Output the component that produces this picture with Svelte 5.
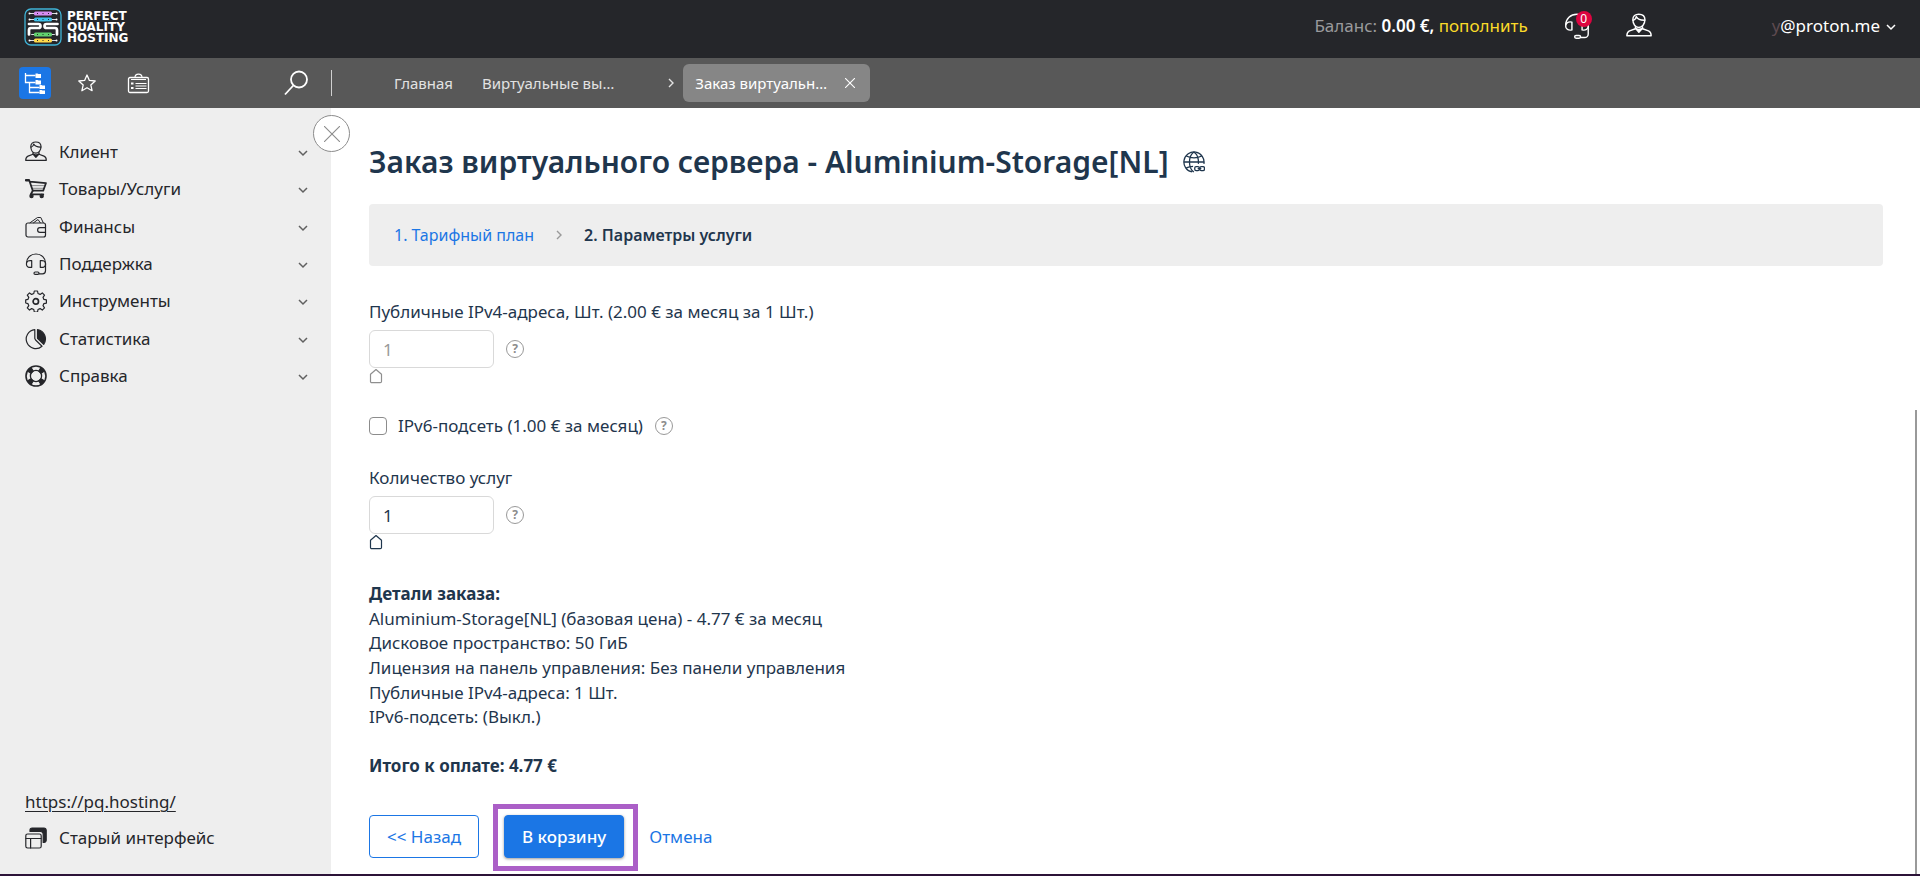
<script>
  const menu = [
    { icon: 'client', label: 'Клиент' },
    { icon: 'cart', label: 'Товары/Услуги' },
    { icon: 'wallet', label: 'Финансы' },
    { icon: 'headset', label: 'Поддержка' },
    { icon: 'gear', label: 'Инструменты' },
    { icon: 'pie', label: 'Статистика' },
    { icon: 'buoy', label: 'Справка' }
  ];

  const details = [
    'Aluminium-Storage[NL] (базовая цена) - 4.77 € за месяц',
    'Дисковое пространство: 50 ГиБ',
    'Лицензия на панель управления: Без панели управления',
    'Публичные IPv4-адреса: 1 Шт.',
    'IPv6-подсеть: (Выкл.)'
  ];

  const bars = [
    { y: 5, color: '#d88cf0' },
    { y: 11, color: '#3fc1ea' },
    { y: 26, color: '#62d26f' },
    { y: 32, color: '#ffd94a' }
  ];

  let ipv6 = $state(false);
  let count = $state('1');
</script>

{#snippet icon(name)}
  <svg class="icon" viewBox="0 0 22 22" fill="none" stroke="currentColor" stroke-width="1.2" stroke-linecap="round" stroke-linejoin="round" aria-hidden="true">
    {#if name === 'client'}
      <path d="M5.8 5.5C5.8 2.6 7.8 1 10.8 1s5.2 1.7 5.2 4.6c0 4-2.4 6.6-5.2 6.6S5.8 9.5 5.8 5.5Z" />
      <path d="M6 6.2C8 5.6 8.600 4.400 8.700 3c1.200 2.200 4 3.200 7.200 3.100" />
      <path d="M8 11.700v1.600l-5 1.800C1.400 15.700.8 17 .7 19.300h20.600c0-2.300-.7-3.600-2.300-4.200l-5-1.800v-1.600" />
      <path d="M8 13l2.900 3.300L14 13l-3.100 1Z" fill="currentColor" />
    {:else if name === 'cart'}
      <path d="M1.200 2.200h3l3.600 10.500h10.400l2.700-7.500-16-1.500" stroke-width="1.800" />
      <path d="M6.300 7.600h12.200M7.600 10.300h11" stroke-width=".5" />
      <path d="M1 2.200h2.500" stroke-width="2.400" />
      <path d="M7.800 12.700l-2 3.600h12.500" stroke-width="1.800" />
      <circle cx="6.500" cy="18" r="1.600" fill="currentColor" />
      <circle cx="16.700" cy="18" r="1.600" fill="currentColor" />
    {:else if name === 'wallet'}
      <rect x="1" y="7" width="19.500" height="14" rx="2" />
      <path d="M20.500 11.700h-5.600a2.300 2.300 0 0 0 0 4.600h5.600" />
      <path d="M5 6.800 12.500 1.500h3.300L18.300 6.800M8.500 6.800l4.500-3.300 2.300 3.300" stroke-width="1" />
    {:else if name === 'headset'}
      <path d="M1.500 10C1.500 5 5.500 1 11 1s9.500 4 9.500 9v7.800a3 3 0 0 1-3 3h-3.300" />
      <path d="M6.700 7.700v6.600c-3 .6-5.300-.5-5.300-3.300s2.300-3.900 5.300-3.300ZM15.300 7.700v6.600c3 .6 5.300-.5 5.300-3.300s-2.300-3.900-5.300-3.300Z" />
      <rect x="9" y="19" width="5" height="2.400" rx="1.200" />
    {:else if name === 'gear'}
      <path d="M8.800 3.500 9.300 1h3.200l.5 2.500 2.100.9 2.200-1.500 2.200 2.200-1.500 2.200.9 2.100 2.500.5v3.200l-2.500.5-.9 2.100 1.500 2.200-2.200 2.200-2.200-1.500-2.100.9-.5 2.500H9.300l-.5-2.500-2.100-.9-2.200 1.500-2.200-2.200 1.500-2.200-.9-2.100L.7 13V9.900l2.200-.5.9-2.100-1.500-2.200 2.200-2.200 2.200 1.500Z" />
      <circle cx="10.800" cy="11.400" r="2.700" stroke-width="1.700" />
    {:else if name === 'pie'}
      <path d="M9.800 1.600a9.500 9.500 0 1 0 7.200 16.600l-6.400-6.200-.8-1.500Z" />
      <path d="M12.500 1.500v8.800l6.200 6A9.500 9.500 0 0 0 12.500 1.500Z" fill="currentColor" />
    {:else if name === 'buoy'}
      <circle cx="11" cy="11" r="10" stroke-width="1.600" />
      <circle cx="11" cy="11" r="5.600" stroke-width="1.300" />
      {#each [45, 135, 225, 315] as a}
        <path d="M8.600 1.800h4.800l-.9 3.700h-3Z" fill="currentColor" transform="rotate({a} 11 11)" />
      {/each}
    {:else if name === 'windows'}
      <path d="M5 4.500V3.200A2.200 2.200 0 0 1 7.200 1H19a2.200 2.200 0 0 1 2.200 2.200v10.100a2.200 2.200 0 0 1-2.200 2.200h-.8V7.100A2.600 2.600 0 0 0 15.600 4.500Z" fill="currentColor" />
      <rect x=".8" y="7" width="15.400" height="14" rx="1.800" />
      <path d="M1 11.500h15M5.600 11.500V21" />
    {/if}
  </svg>
{/snippet}

{#snippet chevron()}
  <svg class="chevron" viewBox="0 0 10 10" fill="none" stroke="currentColor" stroke-width="1.500" aria-hidden="true"><path d="M1 4l4 4 4-4" /></svg>
{/snippet}

{#snippet next()}
  <svg class="next" viewBox="0 0 6 10" fill="none" stroke="currentColor" stroke-width="1.400" aria-hidden="true"><path d="M1 1l4 4-4 4" /></svg>
{/snippet}

{#snippet handle()}
  <svg class="handle" viewBox="0 0 14 16" fill="none" stroke="currentColor" stroke-width="1.200" stroke-linejoin="round" aria-hidden="true"><path d="M1.500 6.300 7 1.500l5.500 4.800v7.200a1.200 1.200 0 0 1-1.200 1.200H2.700a1.200 1.200 0 0 1-1.200-1.200Z" /></svg>
{/snippet}

<div class="page">
  <header class="top">
    <a class="logo" href="#home">
      <svg viewBox="0 0 38 38" fill="none" aria-hidden="true">
        <rect x="1" y="1" width="36" height="36" rx="6" stroke="#3fb4d8" stroke-width="1.300" />
        {#each bars as b}
          <path d="M5 {b.y + 0.5}h28" stroke="#d9dce2" stroke-width="1" />
          <circle cx="5.500" cy={b.y + 0.5} r="1" fill="#fff" />
          <circle cx="32.500" cy={b.y + 0.5} r="1" fill="#fff" />
          <rect x="10" y={b.y - 1.5} width="18" height="4" rx="1.500" fill={b.color} />
          <path d="M13 {b.y + 0.5}h1M18.500 {b.y + 0.5}h1M24 {b.y + 0.5}h1" stroke="#25262a" stroke-width="1" />
        {/each}
        <g stroke-linecap="round" stroke-linejoin="round">
          <path d="M5 16h9.500q2 0 2 2t-2 2H7q-2 0-2 2v4.500M33.500 16h-11q-2 0-2 2t2 2h8.500q2 0 2 2v4.500" stroke="#25262a" stroke-width="4.500" />
          <path d="M5 16h9.500q2 0 2 2t-2 2H7q-2 0-2 2v4.500M33.500 16h-11q-2 0-2 2t2 2h8.500q2 0 2 2v4.500" stroke="#fff" stroke-width="2.700" />
        </g>
      </svg>
      <span class="wordmark"><span>PERFECT</span><span>QUALITY</span><span>HOSTING</span></span>
    </a>

    <div class="account">
      <span class="balance">Баланс: <b>0.00 €,</b> <a href="#pay">пополнить</a></span>
      <button class="bare support" aria-label="0">
        {@render icon('headset')}
        <span class="badge">0</span>
      </button>
      <span class="person">{@render icon('client')}</span>
      <button class="bare user"><span class="dim">y</span>@proton.me {@render chevron()}</button>
    </div>
  </header>

  <nav class="toolbar">
    <div class="tools">
      <button class="bare tool current" aria-label="Меню">
        <svg viewBox="0 0 24 24" fill="none" stroke="#fff" stroke-width="1.300" aria-hidden="true">
          <path d="M2.500 2v9.500h10M2.500 4.500h10M6.500 11.500v10h10M6.500 16.500h10" />
          <path d="M12.500 3.500v-1h2l1 .5h2.500v4h-5.500zM12.500 10v-1h2l1 .5h2.500v4h-5.500zM16.500 15v-1h2l1 .5h2.500v3.500h-5.500zM16.500 20v-1h2l1 .5h2.500v3.500h-5.500z" fill="#fff" stroke="none" />
        </svg>
      </button>
      <button class="bare tool" aria-label="Избранное">
        <svg viewBox="0 0 24 24" fill="none" stroke="#fff" stroke-width="1.300" stroke-linejoin="round" aria-hidden="true"><path d="m12 4 2.400 5.400 5.800.6-4.400 3.900 1.300 5.800L12 16.700l-5.100 3 1.300-5.800L3.800 10l5.800-.6Z" /></svg>
      </button>
      <button class="bare tool" aria-label="Задачи">
        <svg viewBox="0 0 24 24" fill="none" stroke="#fff" stroke-width="1.300" stroke-linejoin="round" aria-hidden="true">
          <rect x="1.500" y="6.500" width="20" height="15" rx="1.500" />
          <path d="M8 6.500c0-4.500 7-4.500 7 0M4 8.500h15" stroke-width="1.200" />
          <path d="M8.500 12.500h11M8.500 17.500h11M8.500 15h11" stroke-width="1" />
          <path d="M4 12.500h2.500M4 17h2.500" stroke-width="2" />
        </svg>
      </button>
      <button class="bare search" aria-label="Поиск">
        <svg viewBox="0 0 24 26" fill="none" stroke="#fff" stroke-width="1.800" aria-hidden="true"><circle cx="15" cy="9.500" r="8" /><path d="M9.300 15.500 1 24.500" /></svg>
      </button>
    </div>
    <div class="tabs">
      <a class="tab" href="#home">Главная</a>
      <a class="tab wide" href="#servers">Виртуальные вы…</a>
      {@render next()}
      <span class="tab active">Заказ виртуальн…
        <button class="bare close" aria-label="Закрыть"><svg viewBox="0 0 10 10" stroke="#fff" stroke-width="1.100" aria-hidden="true"><path d="M0 0l10 10M10 0L0 10" /></svg></button>
      </span>
    </div>
  </nav>

  <div class="body">
    <aside>
      <button class="bare collapse" aria-label="Свернуть"><svg viewBox="0 0 16 16" stroke="currentColor" stroke-width="1.100" aria-hidden="true"><path d="M0 0l16 16M16 0L0 16" /></svg></button>
      <ul>
        {#each menu as m}
          <li><button class="bare item">{@render icon(m.icon)}<span>{m.label}</span>{@render chevron()}</button></li>
        {/each}
      </ul>
      <div class="foot">
        <a class="site" href="#site">https://pq.hosting/</a>
        <a class="old" href="#old">{@render icon('windows')}<span>Старый интерфейс</span></a>
      </div>
    </aside>

    <main>
      <h1>
        Заказ виртуального сервера - Aluminium-Storage[NL]
        <svg class="globe" viewBox="0 0 24 24" fill="none" stroke="currentColor" stroke-width="1.400" aria-hidden="true">
          <path d="M22.800 14A11 11 0 1 0 10 22.900" />
          <path d="M11.800 1C5.500 5.500 5.500 18.500 11.800 23M12 1c4 3 5.200 8 4.800 13M3.500 5.500c5 2.300 12 2.300 17 0M1 12h22M3.500 18.500q3.500-1.500 7.500-1.700" />
          <rect x="12.800" y="17" width="5" height="4.500" rx="1.500" /><rect x="18.400" y="17" width="5" height="4.500" rx="1.500" /><path d="M16 19.200h4" />
        </svg>
      </h1>

      <div class="steps">
        <a href="#plan">1. Тарифный план</a>
        {@render next()}
        <strong>2. Параметры услуги</strong>
      </div>

      <form onsubmit={(e) => e.preventDefault()}>
        <div class="field off">
          <label for="ipv4">Публичные IPv4-адреса, Шт. (2.00 € за месяц за 1 Шт.)</label>
          <div class="line"><input id="ipv4" type="text" value="1" disabled /><span class="help">?</span></div>
          {@render handle()}
        </div>

        <div class="check">
          <input id="ipv6" type="checkbox" bind:checked={ipv6} />
          <label for="ipv6">IPv6-подсеть (1.00 € за месяц)</label>
          <span class="help">?</span>
        </div>

        <div class="field">
          <label for="count">Количество услуг</label>
          <div class="line"><input id="count" type="text" bind:value={count} /><span class="help">?</span></div>
          {@render handle()}
        </div>

        <div class="details">
          <b>Детали заказа:</b>
          {#each details as d}<span>{d}</span>{/each}
          <b class="total">Итого к оплате: 4.77 €</b>
        </div>

        <div class="actions">
          <button class="btn" type="button">&lt;&lt; Назад</button>
          <button class="btn primary" type="submit">В корзину</button>
          <button class="bare cancel" type="button">Отмена</button>
        </div>
      </form>
      <div class="scroll"></div>
    </main>
  </div>
</div>

<style>
  :global(body) { margin: 0; }
  .page {
    min-height: 100vh;
    box-sizing: border-box;
    display: flex;
    flex-direction: column;
    border-bottom: 2px solid #2c1338;
    background: #fff;
    color: #1f364d;
    font: 17px/24px "Noto Sans", sans-serif;
  }
  .page * { box-sizing: border-box; }
  a { color: inherit; text-decoration: none; }
  svg { display: block; flex: none; }
  .bare { border: 0; padding: 0; background: none; color: inherit; font: inherit; display: flex; align-items: center; cursor: pointer; }
  .icon { width: 22px; height: 22px; }
  .chevron { width: 10px; height: 10px; }
  .next { width: 6px; height: 10px; }

  .top { height: 58px; display: flex; align-items: center; justify-content: space-between; padding: 0 24px; background: #25262a; color: #fff; }
  .logo { display: flex; align-items: center; gap: 5px; padding-bottom: 4px; }
  .logo svg { width: 38px; height: 38px; }
  .wordmark { display: flex; flex-direction: column; font: bold 12px/11px "DejaVu Sans", sans-serif; }
  .account { display: flex; align-items: center; padding-bottom: 6px; }
  .balance { color: #9a9a9c; }
  .balance b { color: #fff; font-weight: 600; }
  .balance a { color: #fbdb29; }
  .support { position: relative; margin-left: 36px; }
  .account .icon { width: 26px; height: 26px; }
  .badge { position: absolute; top: -2px; left: 12px; width: 16px; height: 16px; border-radius: 8px; background: #dc0440; font-size: 12px; line-height: 16px; text-align: center; }
  .person { margin: 0 120px 0 36px; }
  .dim { color: #5e4a50; }
  .user .chevron { margin-left: 6px; }

  .toolbar { height: 50px; display: flex; align-items: center; background: #585858; color: #e2e2e2; font-size: 15px; }
  .tools { width: 332px; height: 26px; display: flex; align-items: center; gap: 20px; padding: 0 23px 0 19px; border-right: 1px solid #d0d0d0; }
  .tool { width: 32px; height: 32px; justify-content: center; border-radius: 4px; flex: none; }
  .tool svg { width: 24px; height: 24px; }
  .current { background: #1b76e5; }
  .search { margin-left: auto; }
  .search svg { width: 24px; height: 26px; }
  .tabs { display: flex; align-items: center; padding-left: 50px; }
  .tab { padding: 0 12px; line-height: 38px; }
  .tab.wide { margin: 0 42px 0 5px; }
  .tab.active { display: flex; align-items: center; gap: 18px; margin-left: 9px; padding-right: 15px; border-radius: 6px; background: #868686; color: #fff; }
  .close svg { width: 10px; height: 10px; }

  .body { flex: 1; display: flex; }
  aside { position: relative; width: 331px; flex: none; display: flex; flex-direction: column; justify-content: space-between; padding: 25px 23px 24px 25px; background: #eee; color: #25262a; }
  ul { min-height: 262px; margin: 0; padding: 0; list-style: none; display: grid; grid-auto-rows: 1fr; }
  li { display: flex; }
  .item { flex: 1; gap: 12px; text-align: left; }
  .item .chevron { margin-left: auto; color: #606060; }
  .collapse { position: absolute; top: 7px; right: -19px; width: 37px; height: 37px; justify-content: center; border: 1px solid #8c8c8c; border-radius: 50%; background: #fff; color: #8c8c8c; }
  .collapse svg { width: 16px; height: 16px; }
  .foot { display: flex; flex-direction: column; align-items: flex-start; gap: 12px; }
  .site { text-decoration: underline; text-decoration-thickness: 1px; text-underline-offset: 3px; }
  .old { display: flex; align-items: center; gap: 12px; }

  main { position: relative; flex: 1; padding: 34px 37px 16px 38px; }
  h1 { display: flex; align-items: center; gap: 14px; margin: 0 0 22px; font-size: 30px; line-height: 40px; font-weight: 600; }
  .globe { width: 22px; height: 22px; }
  .steps { min-height: 62px; display: flex; align-items: center; gap: 22px; padding: 0 25px; border-radius: 4px; background: #eee; color: #999; font-size: 16px; }
  .steps a { color: #1b76e5; }
  .steps strong { color: #1f364d; font-weight: 600; }
  form { padding-top: 34px; }
  label { display: block; }
  .line { display: flex; align-items: center; gap: 12px; margin-top: 6px; }
  input[type='text'] { width: 125px; height: 38px; padding: 0 13px; border: 1px solid #d9d9d9; border-radius: 6px; background: #fff; color: inherit; font: inherit; }
  .off input[type='text'] { color: #999; }
  .off .handle { color: #8f8f8f; }
  .handle { width: 14px; height: 16px; }
  .help { width: 18px; height: 18px; border: 1px solid #999; border-radius: 50%; color: #8c8c8c; font-size: 12px; line-height: 16px; font-weight: 700; text-align: center; }
  .check { display: flex; align-items: center; margin: 30px 0 28px; }
  .check input { appearance: none; width: 18px; height: 18px; margin: 0 11px 0 0; border: 1px solid #8c8c8c; border-radius: 4px; background: #fff; }
  .check input:checked { background: #1b76e5; }
  .check .help { margin-left: 12px; }
  .details { min-height: 197px; display: grid; grid-template-rows: repeat(8, 1fr); margin-top: 32px; }
  .details b { font-weight: 700; }
  .details .total { grid-row: 8; }
  .actions { display: flex; align-items: center; gap: 25px; margin-top: 36px; }
  .btn { position: relative; height: 43px; min-width: 110px; padding: 0 17px; border: 1px solid #1b76e5; border-radius: 4px; background: #fff; color: #1b76e5; font: inherit; }
  .primary { background: #1b76e5; color: #fff; font-weight: 500; box-shadow: 0 1px 3px rgba(0, 0, 0, .4); }
  .primary::after { content: ''; position: absolute; inset: -12px -15px -14px -12px; border: 5px solid #ab5fc7; }
  .cancel { color: #1b76e5; }
  .scroll { position: absolute; top: 302px; right: 3px; bottom: 0; width: 2px; background: #999; }
</style>
